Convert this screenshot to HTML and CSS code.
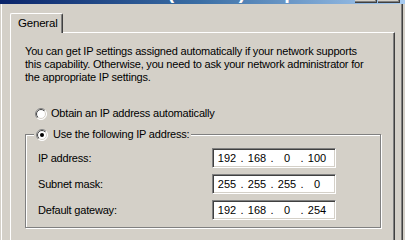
FILE: index.html
```html
<!DOCTYPE html>
<html>
<head>
<meta charset="utf-8">
<link rel="stylesheet" href="styles.css">
</head>
<body>
<div class="window">
  <div class="caption">
    <span class="caption-text">Internet Protocol (TCP/IP) Properties</span>
    <span class="cap-btns"><span class="cap-btn"></span><span class="cap-btn"></span></span>
  </div>
  <div class="frame">
    <div class="tabs"><div class="tab">General</div></div>
    <div class="panel">
      <p class="intro">You can get IP settings assigned automatically if your network supports<br>this capability. Otherwise, you need to ask your network administrator for<br>the appropriate IP settings.</p>
      <div class="radio-row">
        <svg class="radio" width="12" height="12" viewBox="0 0 12 12">
          <defs>
            <linearGradient id="go" x1="0" y1="0" x2="1" y2="1"><stop offset="0.5" stop-color="#808080"/><stop offset="0.5" stop-color="#ffffff"/></linearGradient>
            <linearGradient id="gi" x1="0" y1="0" x2="1" y2="1"><stop offset="0.5" stop-color="#404040"/><stop offset="0.5" stop-color="#d4d0c8"/></linearGradient>
          </defs>
          <circle cx="6" cy="6" r="5.5" fill="#fff" stroke="url(#go)"/>
          <circle cx="6" cy="6" r="4.5" fill="#fff" stroke="url(#gi)"/>
        </svg>
        <span>Obtain an IP address automatically</span>
      </div>
      <fieldset class="group">
        <legend class="legend">
          <svg class="radio" width="12" height="12" viewBox="0 0 12 12">
            <circle cx="6" cy="6" r="5.5" fill="#fff" stroke="url(#go)"/>
            <circle cx="6" cy="6" r="4.5" fill="#fff" stroke="url(#gi)"/>
            <circle cx="6" cy="6" r="2" fill="#000"/>
          </svg>
          <span>Use the following IP address:</span>
        </legend>
        <div class="field-row">
          <span class="label">IP address:</span>
          <div class="ipbox"><span class="oct">192</span><span class="dot">.</span><span class="oct">168</span><span class="dot">.</span><span class="oct">0</span><span class="dot">.</span><span class="oct">100</span></div>
        </div>
        <div class="field-row">
          <span class="label">Subnet mask:</span>
          <div class="ipbox"><span class="oct">255</span><span class="dot">.</span><span class="oct">255</span><span class="dot">.</span><span class="oct">255</span><span class="dot">.</span><span class="oct">0</span></div>
        </div>
        <div class="field-row">
          <span class="label">Default gateway:</span>
          <div class="ipbox"><span class="oct">192</span><span class="dot">.</span><span class="oct">168</span><span class="dot">.</span><span class="oct">0</span><span class="dot">.</span><span class="oct">254</span></div>
        </div>
      </fieldset>
    </div>
  </div>
</div>
</body>
</html>
```
FILE: styles.css
```css
html, body {
  margin: 0;
  padding: 0;
}
body {
  width: 405px;
  height: 240px;
  overflow: hidden;
  background: #d4d0c8;
  color: #000;
  font: 11px/13px "Liberation Sans", Arial, sans-serif;
  letter-spacing: -0.2px;
}
.window {
  width: 405px;
  height: 240px;
  overflow: hidden;
  box-shadow: inset -2px 0 #d4d0c8, inset -3px 0 #404040, inset -4px 0 #808080;
}
.caption {
  height: 4px;
  overflow: hidden;
  display: flex;
  background: linear-gradient(to right, #0a246a 0, #3a6ea5 200px, #a6caf0 400px);
}
.caption-text {
  color: #fff;
  font: bold 20px/20px "Liberation Sans", Arial, sans-serif;
  letter-spacing: 0;
  white-space: nowrap;
  margin-top: -18px;
  margin-left: 2px;
}
.cap-btns {
  margin-left: auto;
  margin-right: 5px;
  display: flex;
  gap: 1px;
}
.cap-btn {
  width: 22px;
  height: 3px;
  background: #d4d0c8;
  box-shadow: inset -1px -1px #404040, inset -2px -2px #808080;
}
.frame {
  padding: 9px 0 0 10px;
  box-shadow: inset 1px 0 #d4d0c8, inset 2px 0 #fff;
}
.tabs {
  display: flex;
  height: 19px;
  position: relative;
  z-index: 1;
}
.tab {
  width: 53px;
  height: 20px;
  box-sizing: border-box;
  background: #d4d0c8;
  border-top: 1px solid #fff;
  border-left: 1px solid #fff;
  border-right: 1px solid #404040;
  border-top-left-radius: 2px;
  border-top-right-radius: 2px;
  box-shadow: inset -1px 0 #808080;
  padding: 3px 0 0 7px;
  font-size: 11.5px;
}
.panel {
  width: 385px;
  height: 220px;
  box-sizing: border-box;
  border-top: 1px solid #fff;
  border-left: 1px solid #fff;
  border-right: 1px solid #404040;
  box-shadow: inset -1px 0 #808080;
  padding: 12px 0 0 14px;
}
.intro {
  margin: 0;
  white-space: nowrap;
}
.radio-row {
  display: flex;
  align-items: center;
  gap: 4px;
  height: 13px;
  margin-top: 23px;
  padding-left: 10px;
}
.radio {
  display: block;
  flex: none;
}
.group {
  margin: 8px 0 0 0;
  width: 356px;
  min-width: 0;
  box-sizing: border-box;
  border: 1px solid #808080;
  box-shadow: inset 1px 1px #fff, 1px 1px #fff;
  padding: 7px 0 7px 12px;
}
.legend {
  display: flex;
  align-items: center;
  gap: 5px;
  height: 13px;
  padding: 0 2px;
  margin-left: -4px;
  background: #d4d0c8;
}
.field-row {
  display: flex;
  align-items: center;
  height: 20px;
  margin-bottom: 6px;
}
.field-row:last-child {
  margin-bottom: 0;
}
.label {
  width: 174px;
}
.ipbox {
  width: 124px;
  height: 20px;
  box-sizing: border-box;
  background: #fff;
  border: 1px solid;
  border-color: #808080 #fff #fff #808080;
  box-shadow: inset 1px 1px #404040, inset -1px -1px #d4d0c8;
  display: flex;
  align-items: center;
  padding-left: 1px;
  letter-spacing: 0;
}
.oct {
  width: 26px;
  text-align: center;
}
.dot {
  width: 4px;
  text-align: center;
}
```
